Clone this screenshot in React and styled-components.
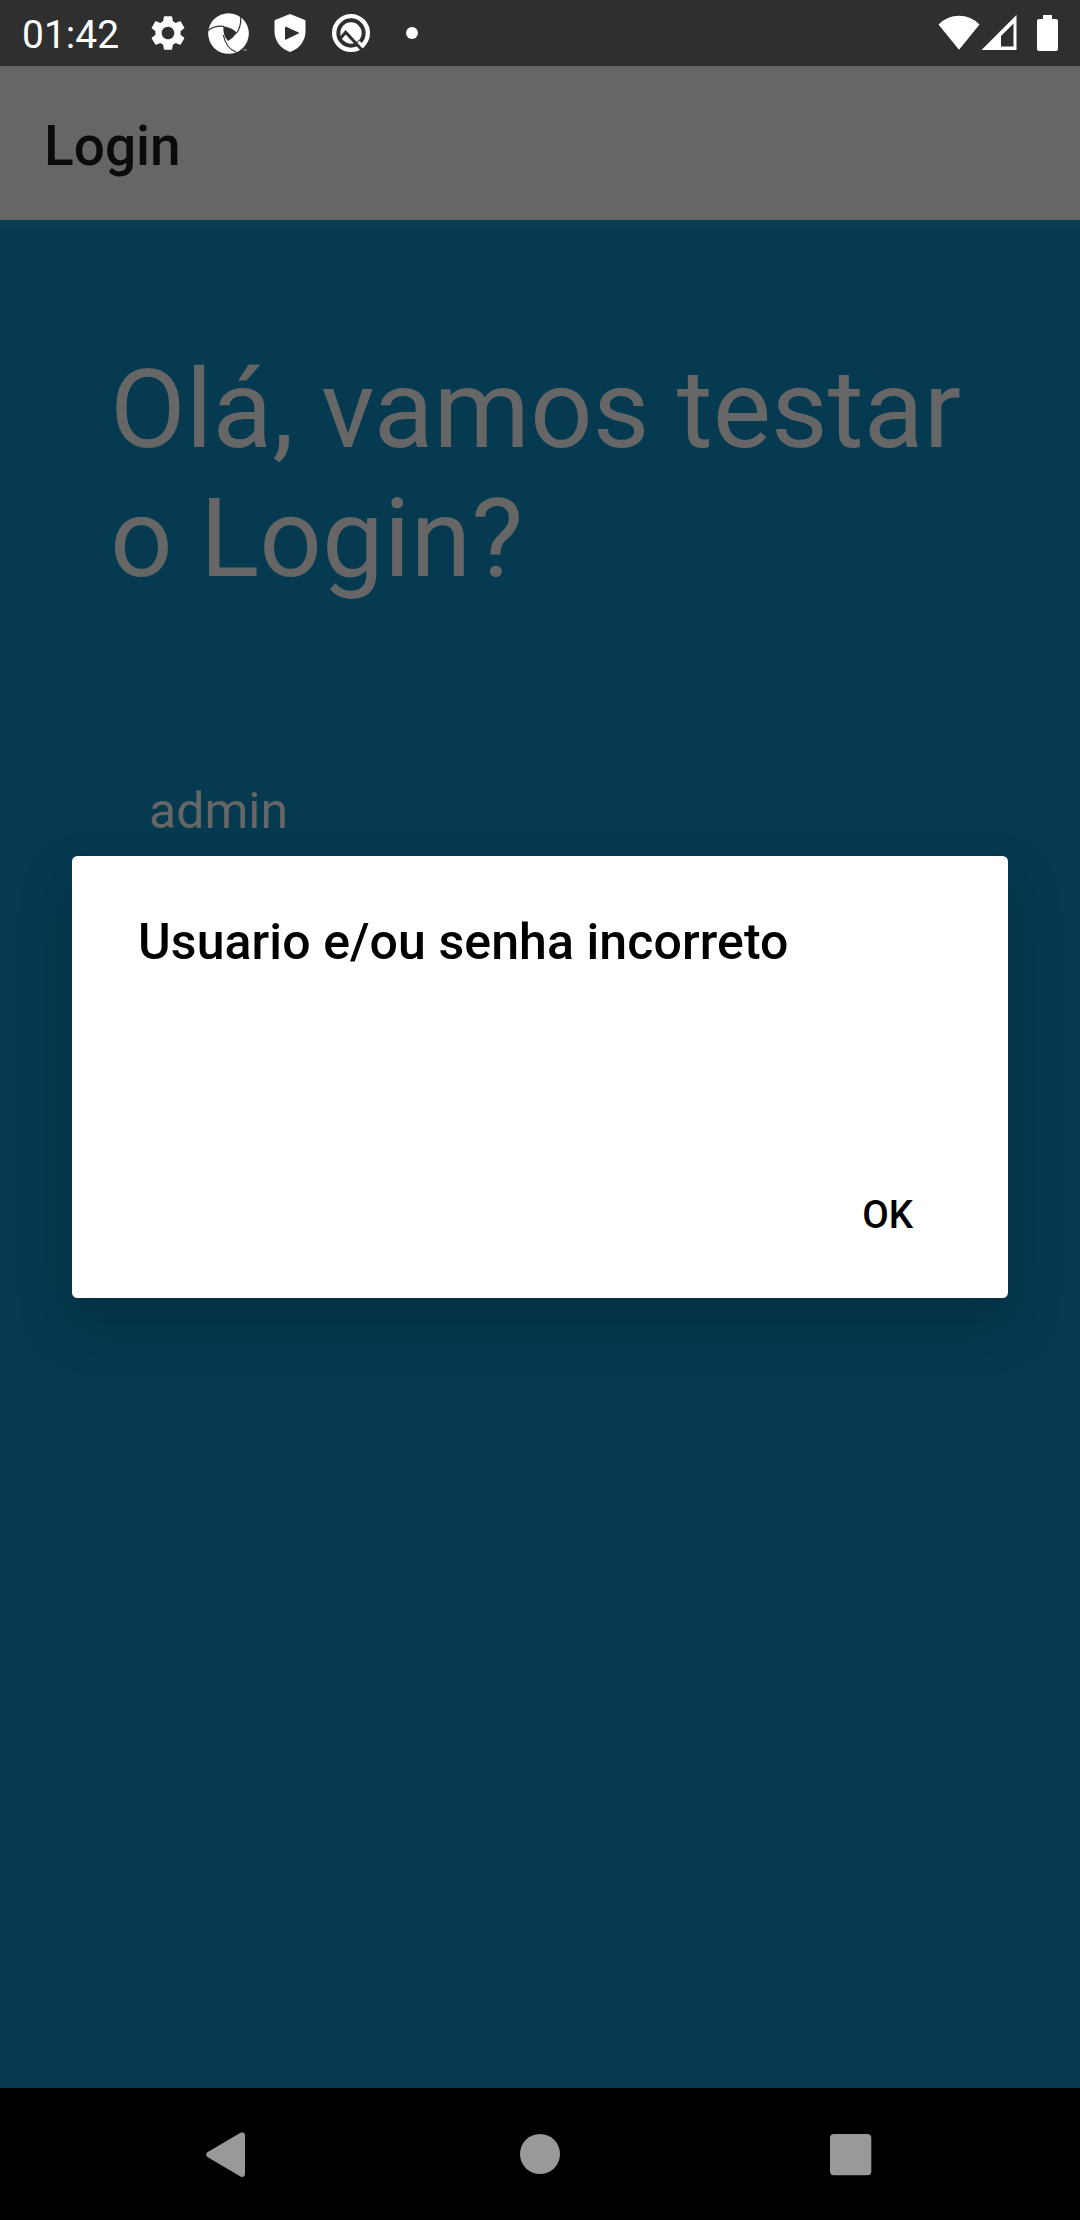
import React from 'react';
import styled, { createGlobalStyle } from 'styled-components';
import { MdSettings } from 'react-icons/md';

const GlobalStyle = createGlobalStyle`
  * { box-sizing: border-box; }
  body {
    margin: 0;
    background: #053a51;
    font-family: Roboto, "Liberation Sans", sans-serif;
  }
`;

const Screen = styled.div`
  position: relative;
  display: flex;
  flex-direction: column;
  width: 1080px;
  height: 2220px;
  overflow: hidden;
  background: #053a51;
`;

const StatusBar = styled.div`
  display: flex;
  align-items: center;
  height: 66px;
  padding: 0 22px;
  background: #2f2f2f;
  color: #fff;
`;

const Clock = styled.time`
  width: 115px;
  padding-top: 4px;
  font-size: 39px;
  line-height: 46px;
`;

const Notifications = styled.div`
  display: grid;
  grid-template-columns: repeat(5, 61px);
  align-items: center;
  justify-items: center;
  flex: 1;
`;

const SystemIcons = styled.div`
  display: flex;
  align-items: center;
  height: 66px;
`;

const Glyph = styled.svg`
  display: block;
  flex: none;
  margin-left: ${(p) => p.$gap || 0}px;
`;

const AppBar = styled.header`
  display: flex;
  align-items: center;
  height: 154px;
  padding: 6px 44px 0;
  background: #666;
`;

const AppTitle = styled.h1`
  margin: 0;
  font-size: 55px;
  font-weight: 500;
  line-height: 64px;
  color: #0b0b0b;
`;

const Content = styled.main`
  flex: 1;
  padding: 125px 110px 0;
  background: linear-gradient(#0b4057, #053a51 10px);
  color: #666;
`;

const Greeting = styled.h2`
  margin: 0;
  font-size: 110px;
  font-weight: 400;
  line-height: 129px;
`;

const Field = styled.div`
  margin-top: 179px;
  padding-left: 39px;
  font-size: 50px;
  line-height: 58px;
`;

const Dialog = styled.section`
  position: absolute;
  top: 856px;
  left: 72px;
  display: flex;
  flex-direction: column;
  justify-content: space-between;
  width: 936px;
  height: 442px;
  padding: 57px 66px 51px;
  border-radius: 5.5px;
  background: #fff;
  color: #000;
  box-shadow: 0 26px 54px rgba(0, 0, 0, 0.21);
`;

const DialogTitle = styled.h3`
  margin: 0;
  font-size: 50px;
  font-weight: 500;
  line-height: 58px;
  letter-spacing: 0.09px;
`;

const DialogActions = styled.div`
  display: flex;
  justify-content: flex-end;
`;

const DialogButton = styled.button`
  padding: 0 29px;
  border: 0;
  background: none;
  font: 500 38.5px/64px Roboto, "Liberation Sans", sans-serif;
  color: inherit;
`;

const NavBar = styled.nav`
  display: flex;
  align-items: center;
  justify-content: center;
  gap: 210px;
  height: 132px;
  background: #000;
`;

const NavButton = styled.div`
  display: flex;
  justify-content: center;
  width: 100px;
`;

const ShutterIcon = () => (
  <Glyph width="41" height="41" viewBox="0 0 123 123">
    <circle cx="61.5" cy="61.5" r="61" fill="#fff" />
    <path d="M46 40Q68 42 87 59Q75 75 60 84Q45 70 46 40Z" fill="#2f2f2f" />
    <path
      d="M-2 54Q18 37 48 40M98 12Q100 40 86 60M84 117Q54 106 46 66"
      fill="none"
      stroke="#2f2f2f"
      strokeWidth="3.5"
    />
    <path d="M106 111H117" stroke="#aaa" strokeWidth="3" />
  </Glyph>
);

const ShieldPlayIcon = () => (
  <Glyph width="32" height="38" viewBox="0 0 32 38">
    <path
      d="M16 0L31 6Q31.5 6.3 31.5 7V17C31.5 27 25.5 34.5 16 38C6.5 34.5 .5 27 .5 17V7Q.5 6.3 1 6Z"
      fill="#fff"
    />
    <path d="M11.5 13V25.3L24.6 19Z" fill="#2f2f2f" stroke="#2f2f2f" strokeLinejoin="round" />
  </Glyph>
);

const AssistIcon = () => (
  <Glyph width="40" height="40" viewBox="0 0 120 120">
    <circle cx="60" cy="60" r="50.5" fill="none" stroke="#fff" strokeWidth="13" />
    <circle cx="60" cy="60" r="32" fill="#fff" />
    <path d="M26 79L44 58L94 112" fill="none" stroke="#2f2f2f" strokeWidth="9" />
    <path d="M82 86L98 103" stroke="#fff" strokeWidth="9" />
  </Glyph>
);

export default function App() {
  return (
    <>
      <GlobalStyle />
      <Screen>
        <StatusBar>
          <Clock>01:42</Clock>
          <Notifications>
            <MdSettings size={42} />
            <ShutterIcon />
            <ShieldPlayIcon />
            <AssistIcon />
            <Glyph width="12" height="12">
              <circle cx="6" cy="6" r="6" fill="#fff" />
            </Glyph>
          </Notifications>
          <SystemIcons>
            <Glyph width="42" height="36" viewBox="0 0 42 36">
              <path d="M.5 9.5Q9 .7 21 .7T41.5 9.5L21 34.7Z" fill="#fff" />
            </Glyph>
            <Glyph width="36" height="36" viewBox="0 0 36 36" $gap={1}>
              <path
                d="M35.5 0V35H.5ZM32.5 8.5L20 21V31.5H32.5Z"
                fill="#fff"
                fillRule="evenodd"
              />
            </Glyph>
            <Glyph width="21" height="36" viewBox="0 0 21 36" $gap={20}>
              <path
                d="M6 0H15V4H19Q21 4 21 6V34Q21 36 19 36H2Q0 36 0 34V6Q0 4 2 4H6Z"
                fill="#fff"
              />
            </Glyph>
          </SystemIcons>
        </StatusBar>
        <AppBar>
          <AppTitle>Login</AppTitle>
        </AppBar>
        <Content>
          <Greeting>
            Olá, vamos testar
            <br />o Login?
          </Greeting>
          <Field>admin</Field>
        </Content>
        <NavBar>
          <NavButton>
            <Glyph width="48" height="46" viewBox="0 0 48 46">
              <path
                d="M3.3 23.6L36 4.3V43Z"
                fill="#999"
                stroke="#999"
                strokeWidth="6"
                strokeLinejoin="round"
              />
            </Glyph>
          </NavButton>
          <NavButton>
            <Glyph width="40" height="40">
              <circle cx="20" cy="20" r="20" fill="#999" />
            </Glyph>
          </NavButton>
          <NavButton>
            <Glyph width="44" height="44">
              <rect x="2" y="2" width="41.3" height="41.3" rx="4" fill="#999" />
            </Glyph>
          </NavButton>
        </NavBar>
        <Dialog>
          <DialogTitle>Usuario e/ou senha incorreto</DialogTitle>
          <DialogActions>
            <DialogButton>OK</DialogButton>
          </DialogActions>
        </Dialog>
      </Screen>
    </>
  );
}
